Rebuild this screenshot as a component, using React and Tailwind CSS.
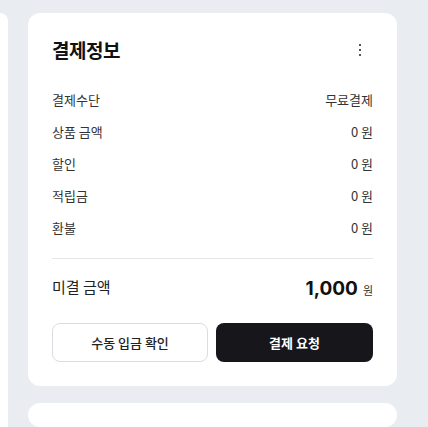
import React from "react";

const rows = [
  { label: "결제수단", value: "무료결제" },
  { label: "상품 금액", value: "0 원" },
  { label: "할인", value: "0 원" },
  { label: "적립금", value: "0 원" },
  { label: "환불", value: "0 원" },
];

export default function App() {
  return (
    <div
      className="w-[428px] h-[427px] overflow-hidden bg-[#e9ecf0] pt-[13px] flex gap-5"
      style={{ fontFamily: "'Noto Sans CJK KR', 'Noto Sans', sans-serif" }}
    >
      <div className="w-[8px] shrink-0 bg-white rounded-tr-xl" />
      <div className="w-[369px] shrink-0 flex flex-col gap-[17px]">
        <div className="bg-white rounded-xl px-6 pt-[23px] pb-6">
          <div className="flex items-center justify-between h-[28px]">
            <h2 className="text-[19px] font-bold text-[#111] tracking-tight">결제정보</h2>
            <div className="flex flex-col items-center gap-[3px] mr-[12px]">
              <span className="w-[2px] h-[2px] bg-[#555]" />
              <span className="w-[2px] h-[2px] bg-[#555]" />
              <span className="w-[2px] h-[2px] bg-[#555]" />
            </div>
          </div>
          <div className="mt-[26px] flex flex-col gap-3">
            {rows.map((r) => (
              <div key={r.label} className="flex items-center justify-between h-5 text-[13px] text-[#333]">
                <span>{r.label}</span>
                <span>{r.value}</span>
              </div>
            ))}
          </div>
          <div className="mt-5 border-t border-[#e5e7eb]" />
          <div className="pt-[16px] flex items-center justify-between h-[44px]">
            <span className="text-[15px] text-[#222] -mt-[4px]">미결 금액</span>
            <span className="flex items-baseline gap-[5px]">
              <span className="text-[19px] font-bold text-[#111]" style={{ fontFamily: "Inter, 'Noto Sans', sans-serif" }}>1,000</span>
              <span className="text-[11px] text-[#333]">원</span>
            </span>
          </div>
          <div className="mt-[20px] flex gap-2">
            <button className="w-[156px] h-[39px] rounded-lg border border-[#d9dce1] bg-white text-[13px] font-medium text-[#222]">
              수동 입금 확인
            </button>
            <button className="flex-1 h-[39px] rounded-lg bg-[#17171b] text-[13px] font-semibold text-white">
              결제 요청
            </button>
          </div>
        </div>
        <div className="bg-white rounded-xl h-[60px]" />
      </div>
    </div>
  );
}
